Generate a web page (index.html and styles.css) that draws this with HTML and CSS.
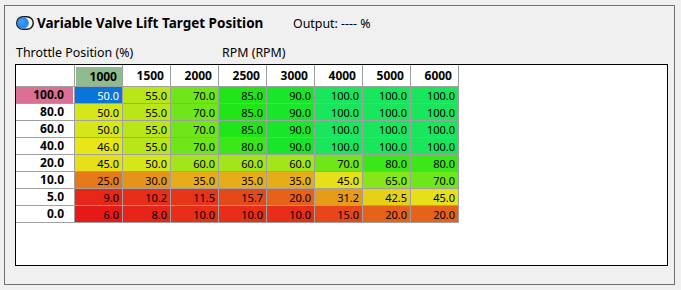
FILE: index.html
```html
<!DOCTYPE html>
<html>
<head>
<meta charset="utf-8">
<link rel="stylesheet" href="styles.css">
</head>
<body>
<div class="panel">
  <div class="title-row">
    <svg class="toggle" width="18" height="14" viewBox="0 0 18 14">
      <rect x="0.75" y="0.75" width="16.5" height="12.5" rx="6.25" fill="#f4f4f4" stroke="#1c1c1c" stroke-width="1.5"/>
      <circle cx="7" cy="7" r="5.8" fill="#2a8af2"/>
      <circle cx="6" cy="5.8" r="3" fill="#4aa3ff" opacity="0.6"/>
    </svg>
    <span class="title">Variable Valve Lift Target Position</span>
    <span class="output">Output: ---- %</span>
  </div>
  <div class="axis-row">
    <span class="axis-y">Throttle Position (%)</span>
    <span class="axis-x">RPM (RPM)</span>
  </div>
  <div class="table-box">
    <div class="grid">
      <div class="corner"></div>
      <div class="colh sel"><span>1000</span></div>
      <div class="colh">1500</div>
      <div class="colh">2000</div>
      <div class="colh">2500</div>
      <div class="colh">3000</div>
      <div class="colh">4000</div>
      <div class="colh">5000</div>
      <div class="colh">6000</div>

      <div class="rowh sel"><span>100.0</span></div>
      <div class="cell active">50.0</div>
      <div class="cell" style="--h:73">55.0</div>
      <div class="cell" style="--h:95">70.0</div>
      <div class="cell" style="--h:118">85.0</div>
      <div class="cell" style="--h:125">90.0</div>
      <div class="cell" style="--h:140">100.0</div>
      <div class="cell" style="--h:140">100.0</div>
      <div class="cell" style="--h:140">100.0</div>

      <div class="rowh"><span>80.0</span></div>
      <div class="cell" style="--h:65">50.0</div>
      <div class="cell" style="--h:73">55.0</div>
      <div class="cell" style="--h:95">70.0</div>
      <div class="cell" style="--h:118">85.0</div>
      <div class="cell" style="--h:125">90.0</div>
      <div class="cell" style="--h:140">100.0</div>
      <div class="cell" style="--h:140">100.0</div>
      <div class="cell" style="--h:140">100.0</div>

      <div class="rowh"><span>60.0</span></div>
      <div class="cell" style="--h:65">50.0</div>
      <div class="cell" style="--h:73">55.0</div>
      <div class="cell" style="--h:95">70.0</div>
      <div class="cell" style="--h:118">85.0</div>
      <div class="cell" style="--h:125">90.0</div>
      <div class="cell" style="--h:140">100.0</div>
      <div class="cell" style="--h:140">100.0</div>
      <div class="cell" style="--h:140">100.0</div>

      <div class="rowh"><span>40.0</span></div>
      <div class="cell" style="--h:60">46.0</div>
      <div class="cell" style="--h:73">55.0</div>
      <div class="cell" style="--h:95">70.0</div>
      <div class="cell" style="--h:110">80.0</div>
      <div class="cell" style="--h:125">90.0</div>
      <div class="cell" style="--h:140">100.0</div>
      <div class="cell" style="--h:140">100.0</div>
      <div class="cell" style="--h:140">100.0</div>

      <div class="rowh"><span>20.0</span></div>
      <div class="cell" style="--h:58">45.0</div>
      <div class="cell" style="--h:65">50.0</div>
      <div class="cell" style="--h:80">60.0</div>
      <div class="cell" style="--h:80">60.0</div>
      <div class="cell" style="--h:80">60.0</div>
      <div class="cell" style="--h:95">70.0</div>
      <div class="cell" style="--h:110">80.0</div>
      <div class="cell" style="--h:110">80.0</div>

      <div class="rowh"><span>10.0</span></div>
      <div class="cell" style="--h:28">25.0</div>
      <div class="cell" style="--h:36">30.0</div>
      <div class="cell" style="--h:43">35.0</div>
      <div class="cell" style="--h:43">35.0</div>
      <div class="cell" style="--h:43">35.0</div>
      <div class="cell" style="--h:58">45.0</div>
      <div class="cell" style="--h:88">65.0</div>
      <div class="cell" style="--h:95">70.0</div>

      <div class="rowh"><span>5.0</span></div>
      <div class="cell" style="--h:4">9.0</div>
      <div class="cell" style="--h:6">10.2</div>
      <div class="cell" style="--h:8">11.5</div>
      <div class="cell" style="--h:14">15.7</div>
      <div class="cell" style="--h:21">20.0</div>
      <div class="cell" style="--h:38">31.2</div>
      <div class="cell" style="--h:54">42.5</div>
      <div class="cell" style="--h:58">45.0</div>

      <div class="rowh"><span>0.0</span></div>
      <div class="cell" style="--h:0">6.0</div>
      <div class="cell" style="--h:3">8.0</div>
      <div class="cell" style="--h:6">10.0</div>
      <div class="cell" style="--h:6">10.0</div>
      <div class="cell" style="--h:6">10.0</div>
      <div class="cell" style="--h:13">15.0</div>
      <div class="cell" style="--h:21">20.0</div>
      <div class="cell" style="--h:21">20.0</div>
    </div>
  </div>
</div>
</body>
</html>
```
FILE: styles.css
```css
* { box-sizing: border-box; }
html, body { margin: 0; padding: 0; background: #f0f0f0; }
body {
  font-family: "Noto Sans", "Open Sans", sans-serif;
  color: #000;
  width: 681px;
  height: 290px;
  overflow: hidden;
}
.panel {
  margin: 5px 0 0 4px;
  width: 671px;
  height: 280px;
  border: 1px solid #707070;
  padding: 6px 6px 0 10px;
  display: flex;
  flex-direction: column;
}
.title-row {
  height: 22px;
  padding-left: 1px;
  display: flex;
  align-items: center;
}
.toggle { display: block; flex: none; }
.title {
  margin-left: 3px;
  width: 256px;
  font-weight: 700;
  font-size: 13.5px;
  white-space: nowrap;
}
.output { font-size: 12.4px; white-space: nowrap; }
.axis-row {
  height: 16px;
  margin-top: 10px;
  padding-left: 1px;
  display: flex;
  align-items: center;
  font-size: 12.4px;
  white-space: nowrap;
}
.axis-y { width: 206px; }
.table-box {
  margin-top: 4px;
  width: 653px;
  height: 202px;
  border: 1px solid #000;
  background: #fff;
}
.grid {
  display: grid;
  grid-template-columns: 58px repeat(8, 47px);
  grid-template-rows: 21px repeat(8, 16px);
  gap: 1px;
  width: 443px;
  background: #a0a0a0;
  padding: 0 1px 1px 0;
}
.grid > div {
  display: flex;
  align-items: center;
  justify-content: flex-end;
  white-space: nowrap;
  line-height: 1;
}
.corner { background: #fff; }
.colh {
  background: #fff;
  font-weight: 700;
  font-size: 12px;
  padding-right: 6px;
}
.colh.sel {
  padding: 2px 0 0 1px;
  align-items: stretch;
}
.colh.sel span {
  flex: 1;
  background: #8fbc8f;
  display: flex;
  align-items: center;
  justify-content: flex-end;
  padding-right: 5px;
}
.rowh {
  background: #fff;
  font-weight: 700;
  font-size: 12px;
  padding-right: 1px;
  align-items: stretch !important;
}
.rowh span {
  flex: 1;
  display: flex;
  align-items: center;
  justify-content: flex-end;
  padding-right: 9px;
}
.rowh.sel span { background: #db7093; }
.cell {
  background: hsl(var(--h) 80% 50%);
  font-size: 11px;
  padding-right: 3px;
}
.cell.active { background: #0a74da; color: #fff; }
```
